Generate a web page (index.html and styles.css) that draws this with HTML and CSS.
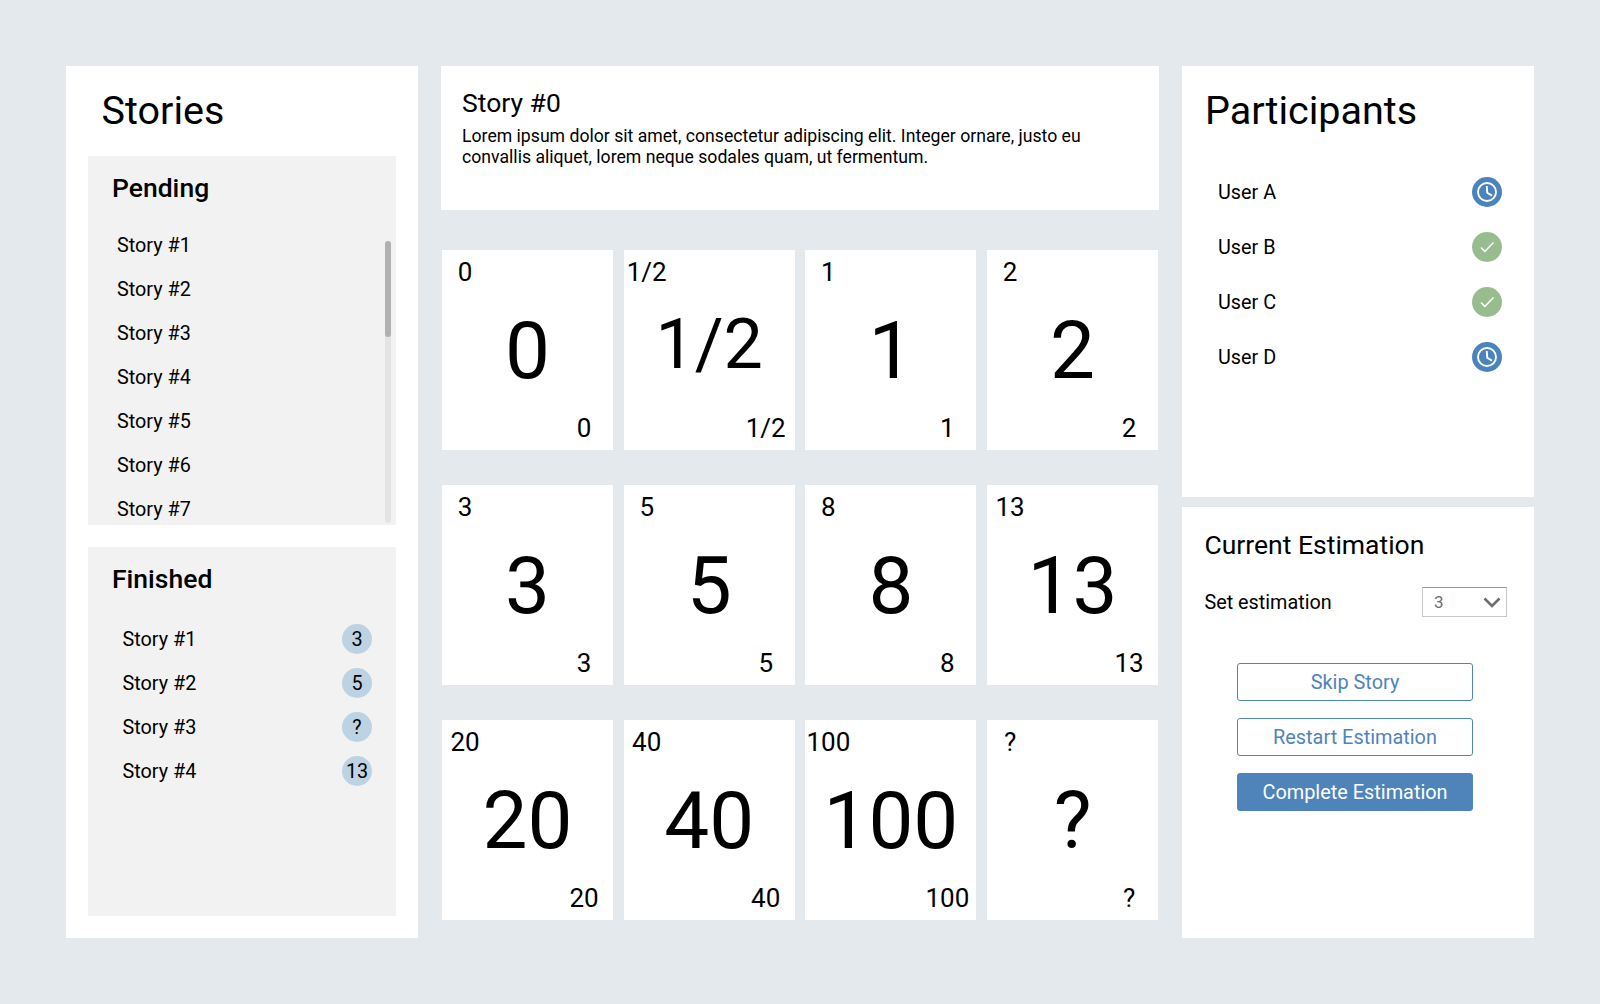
FILE: index.html
```html
<!DOCTYPE html>
<html lang="en">
<head>
    <meta charset="UTF-8">
    <meta name="viewport" content="width=device-width, initial-scale=1.0">
    <title>Story estimation</title>
    <link rel="stylesheet" href="styles.css">
</head>
<body>

    <div class="board">

        <aside class="panel stories">
            <h1 class="title">Stories</h1>

            <section class="group">
                <h2>Pending</h2>
                <ul class="story-list pending">
                    <li>Story #1</li>
                    <li>Story #2</li>
                    <li>Story #3</li>
                    <li>Story #4</li>
                    <li>Story #5</li>
                    <li>Story #6</li>
                    <li>Story #7</li>
                </ul>
                <div class="scroll-track"><div class="scroll-thumb"></div></div>
            </section>

            <section class="group">
                <h2>Finished</h2>
                <ul class="story-list finished">
                    <li>Story #1 <span class="badge">3</span></li>
                    <li>Story #2 <span class="badge">5</span></li>
                    <li>Story #3 <span class="badge">?</span></li>
                    <li>Story #4 <span class="badge">13</span></li>
                </ul>
            </section>
        </aside>

        <main class="center">
            <div class="panel story-info">
                <h2>Story #0</h2>
                <p>Lorem ipsum dolor sit amet, consectetur adipiscing elit. Integer ornare, justo eu convallis aliquet, lorem neque sodales quam, ut fermentum.</p>
            </div>

            <div class="cards">
                <div class="card"><span class="corner">0</span><span class="value">0</span><span class="corner end">0</span></div>
                <div class="card"><span class="corner">1/2</span><span class="value half">1/2</span><span class="corner end">1/2</span></div>
                <div class="card"><span class="corner">1</span><span class="value">1</span><span class="corner end">1</span></div>
                <div class="card"><span class="corner">2</span><span class="value">2</span><span class="corner end">2</span></div>
                <div class="card"><span class="corner">3</span><span class="value">3</span><span class="corner end">3</span></div>
                <div class="card"><span class="corner">5</span><span class="value">5</span><span class="corner end">5</span></div>
                <div class="card"><span class="corner">8</span><span class="value">8</span><span class="corner end">8</span></div>
                <div class="card"><span class="corner">13</span><span class="value">13</span><span class="corner end">13</span></div>
                <div class="card"><span class="corner">20</span><span class="value">20</span><span class="corner end">20</span></div>
                <div class="card"><span class="corner">40</span><span class="value">40</span><span class="corner end">40</span></div>
                <div class="card"><span class="corner">100</span><span class="value">100</span><span class="corner end">100</span></div>
                <div class="card"><span class="corner">?</span><span class="value">?</span><span class="corner end">?</span></div>
            </div>
        </main>

        <aside class="side">
            <div class="panel participants">
                <h1 class="title">Participants</h1>
                <ul class="user-list">
                    <li>User A
                        <svg class="status" viewBox="0 0 30 30"><circle class="wait" cx="15" cy="15" r="15"/><circle class="mark" cx="15" cy="15" r="9"/><polyline class="mark" points="14.8,9 15.2,15.8 20,18.6"/></svg>
                    </li>
                    <li>User B
                        <svg class="status" viewBox="0 0 30 30"><circle class="done" cx="15" cy="15" r="15"/><polyline class="mark thin" points="9,15.5 12.8,19.5 21.5,10.5"/></svg>
                    </li>
                    <li>User C
                        <svg class="status" viewBox="0 0 30 30"><circle class="done" cx="15" cy="15" r="15"/><polyline class="mark thin" points="9,15.5 12.8,19.5 21.5,10.5"/></svg>
                    </li>
                    <li>User D
                        <svg class="status" viewBox="0 0 30 30"><circle class="wait" cx="15" cy="15" r="15"/><circle class="mark" cx="15" cy="15" r="9"/><polyline class="mark" points="14.8,9 15.2,15.8 20,18.6"/></svg>
                    </li>
                </ul>
            </div>

            <div class="panel estimation">
                <h2>Current Estimation</h2>
                <div class="set-row">
                    <span>Set estimation</span>
                    <div class="select">
                        3
                        <svg class="chevron" viewBox="0 0 18 11"><polyline points="1.5,1.5 9,9 16.5,1.5"/></svg>
                    </div>
                </div>
                <div class="actions">
                    <button class="btn">Skip Story</button>
                    <button class="btn">Restart Estimation</button>
                    <button class="btn primary">Complete Estimation</button>
                </div>
            </div>
        </aside>

    </div>

</body>
</html>
```

FILE: styles.css
```css
* {
    box-sizing: border-box;
}
html, body {
    margin: 0;
    height: 1004px;
    overflow: hidden;
}
body {
    background: #e4e9ed;
    color: #000;
    font-family: Roboto, "Noto Sans", sans-serif;
    padding: 66px;
}
h1, h2, p, ul {
    margin: 0;
    padding: 0;
    font-weight: 400;
}
ul {
    list-style: none;
}
.board {
    display: grid;
    grid-template-columns: 352px 1fr 352px;
    column-gap: 22px;
    height: 872px;
}
.panel {
    background: #fff;
}
.title {
    font-size: 39.5px;
    line-height: 46px;
    padding-top: 22px;
}

/* left column */
.stories {
    display: flex;
    flex-direction: column;
    gap: 22px;
    padding: 0 22px;
}
.stories .title {
    height: 68px;
    padding-left: 13.5px;
}
.group {
    position: relative;
    display: flex;
    flex-direction: column;
    height: 369px;
    background: #f2f2f2;
    padding-top: 16px;
}
.group h2 {
    font-size: 26.5px;
    font-weight: 500;
    line-height: 32px;
    padding-left: 24px;
    margin-bottom: 18px;
}
.story-list {
    flex: 1;
    min-height: 0;
    overflow: hidden;
    font-size: 19.8px;
}
.story-list li {
    display: flex;
    align-items: center;
    justify-content: space-between;
    height: 44px;
}
.pending {
    padding: 1px 0 0 29px;
}
.finished {
    padding: 4px 24px 0 34.5px;
}
.badge {
    width: 30px;
    height: 30px;
    border-radius: 50%;
    background: #bdd2e2;
    display: flex;
    align-items: center;
    justify-content: center;
}
.scroll-track {
    position: absolute;
    top: 85px;
    right: 5px;
    bottom: 2px;
    width: 6px;
    border-radius: 3px;
    background: #e3e4e4;
}
.scroll-thumb {
    height: 96px;
    border-radius: 3px;
    background: #b0b1b3;
}

/* middle column */
.center {
    display: flex;
    flex-direction: column;
}
.story-info {
    height: 144px;
    margin: 0 1px 0 0.5px;
    padding: 21px 21.5px;
}
.story-info h2 {
    font-size: 26.5px;
    line-height: 32px;
    margin-bottom: 7px;
}
.story-info p {
    font-size: 17.65px;
    line-height: 21px;
    max-width: 640px;
}
.cards {
    display: grid;
    grid-template-columns: repeat(4, 171px);
    grid-auto-rows: 200px;
    gap: 35px 10.7px;
    margin-top: 40px;
    padding-left: 2px;
}
.card {
    display: flex;
    flex-direction: column;
    background: #fff;
}
.corner {
    font-size: 26px;
    line-height: 30px;
    width: 46px;
    margin-top: 7px;
    text-align: center;
    white-space: nowrap;
}
.corner.end {
    align-self: flex-end;
    width: 58px;
    margin-top: 0;
    margin-bottom: 7px;
    display: flex;
    justify-content: center;
}
.value {
    flex: 1;
    display: flex;
    align-items: center;
    justify-content: center;
    padding-top: 1px;
    font-size: 80px;
}
.value.half {
    font-size: 70px;
    padding: 0 0 12px;
}

/* right column */
.side {
    display: grid;
    grid-template-rows: 1fr 1fr;
    row-gap: 10px;
}
.participants .title {
    padding-left: 23px;
}
.user-list {
    margin-top: 31px;
    padding: 0 32px 0 36px;
    font-size: 19.8px;
}
.user-list li {
    display: flex;
    align-items: center;
    justify-content: space-between;
    height: 55px;
}
.status {
    width: 30px;
    height: 30px;
    margin-top: -2px;
}
.wait { fill: #4b84bd; }
.done { fill: #97bd8f; }
.mark {
    fill: none;
    stroke: #fff;
    stroke-width: 1.9;
}
.mark.thin {
    stroke-width: 1.5;
}
.estimation {
    padding: 22px 27px 0 22.5px;
}
.estimation h2 {
    font-size: 26.5px;
    line-height: 32px;
}
.set-row {
    display: flex;
    align-items: center;
    justify-content: space-between;
    margin-top: 26px;
    font-size: 19.8px;
}
.select {
    display: flex;
    align-items: center;
    justify-content: space-between;
    width: 85px;
    height: 30px;
    padding: 0 5px 0 11px;
    border: 1px solid #c8c8c8;
    border-top-color: #9a9a9a;
    font-size: 17px;
    color: #6d6d6d;
}
.chevron {
    width: 18px;
    height: 11px;
    fill: none;
    stroke: #6d6d6d;
    stroke-width: 2.6;
}
.actions {
    display: flex;
    flex-direction: column;
    gap: 17px;
    width: 236px;
    margin: 46px 0 0 32.5px;
}
.btn {
    height: 38px;
    font: inherit;
    font-size: 19.9px;
    color: #4f84bb;
    background: #fff;
    border: 1px solid #4f84bb;
    border-radius: 3px;
    padding: 0;
}
.btn.primary {
    background: #4f84bb;
    color: #fff;
}
```
